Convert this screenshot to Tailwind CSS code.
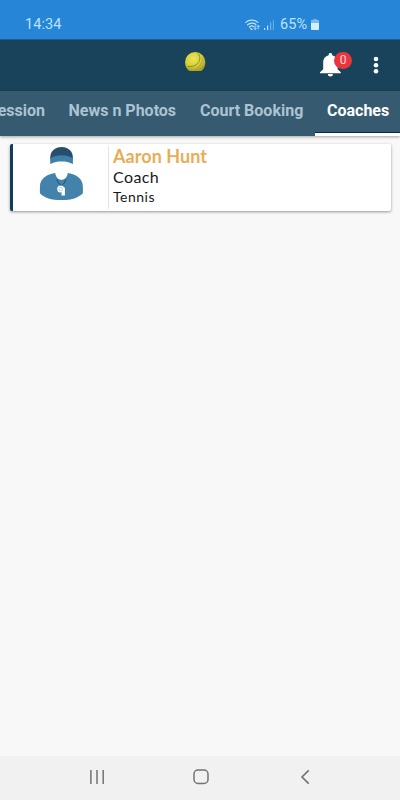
<!DOCTYPE html>
<html lang="en">
<head>
    <meta charset="UTF-8">
    <meta name="viewport" content="width=device-width, initial-scale=1.0">
    <title>Coaches</title>
    <script src="https://cdn.jsdelivr.net/npm/@tailwindcss/browser@4"></script>
</head>
<body class="flex flex-col w-[400px] h-[800px] overflow-hidden bg-[#f8f8f8] font-[Roboto,sans-serif]">

<!-- Status bar -->
<div class="flex items-center h-[39px] shrink-0 pt-[10px] pl-[25px] bg-[#2785d8] text-[#b9e4fa]">
    <span class="w-[220px] text-[14.5px] leading-4 tracking-[0.1px]">14:34</span>
    <svg class="w-[15px] h-[12px]" viewBox="0 0 15 12" fill="none" stroke="#b9e4fa" stroke-linecap="round">
        <path d="M.8 3.4C4 .3 9.4.3 12.8 3.4M2.6 5.800c2.400-2.200 6-2.200 8.300-.3M4.500 8c1.200-1.200 3.200-1.200 4.400-.2" stroke-width="1.200"/>
        <path d="M5.600 9.400L7 10.600" stroke-width="1.300"/>
        <path d="M10.200 6.800v3.600M9 9.400l1.200 1.200 1.200-1.200M13.200 10V6.600M12 7.600l1.200-1.200 1.200 1.200" stroke-width=".9"/>
    </svg>
    <svg class="ml-[3px] w-[12px] h-[12px]" viewBox="0 0 12 12" fill="#b9e4fa">
        <rect x="1" y="9" width="1.200" height="2"/>
        <rect x="4" y="6.500" width="1.200" height="4.500"/>
        <rect x="7" y="3.500" width="1.200" height="7.500" opacity=".5"/>
        <rect x="9.800" y="1" width="1.200" height="10" opacity=".4"/>
    </svg>
    <span class="ml-[5px] w-[31px] text-[14.5px] leading-4 tracking-[0.1px] whitespace-nowrap">65%</span>
    <svg class="mb-px w-[8px] h-[11px]" viewBox="0 0 8 11">
        <path d="M2.300 0h3.400v1H8v3H0V1h2.300z" fill="#7dbbea"/>
        <path d="M0 4h8v6.200a.8.8 0 01-.8.8H.8a.8.8 0 01-.8-.8z" fill="#d5effc"/>
    </svg>
</div>

<!-- App bar -->
<div class="flex h-[52px] shrink-0 bg-[#18435a] border-t border-[#1f5f8c]">
    <svg class="ml-[184px] mt-[11px] w-[22px] h-[22px]" viewBox="0 0 22 22">
        <defs>
            <radialGradient id="ball" cx=".42" cy=".35" r=".65">
                <stop offset="0" stop-color="#ece657"/>
                <stop offset=".6" stop-color="#d6d03a"/>
                <stop offset="1" stop-color="#a8a324"/>
            </radialGradient>
        </defs>
        <path d="M5.500 20C2.800 18.200 1 15 1 11.200a10.200 10.200 0 0120.400 0c0 3.800-1.600 7-4.300 8.800z" fill="url(#ball)"/>
        <path d="M14.200 2.600c2.600 3.400 2 7.600-.9 10.200-2.400 2.100-5.400 3-9.300 2.600" fill="none" stroke="#908b2a" stroke-width="1"/>
        <path d="M18.300 6.500c.3 4.500-2.300 8.500-5.300 10.500-1.500 1-2.500 1.800-3.500 3" fill="none" stroke="#aaa533" stroke-width=".8"/>
    </svg>
    <div class="relative ml-[114px] mt-[12px] w-[33px] h-[26px]">
        <svg class="w-[21px] h-[25px]" viewBox="0 0 21 25" fill="#fff">
            <path d="M10.400 1.100c1 0 1.700.7 1.700 1.700v.5c3.600.8 5.500 3.700 5.500 7.300v6.600l3.200 3.100v1H0v-1l3.200-3.100v-6.600C3.200 7 5.200 4.100 8.700 3.300v-.5c0-1 .7-1.700 1.700-1.700zM7.900 22h5a2.500 2.500 0 01-5 0z"/>
        </svg>
        <span class="absolute left-[14px] top-0 flex items-center justify-center w-[18px] h-[17px] pb-px rounded-full bg-[#e9363c] text-[12px] leading-none text-[#fbd9d9]">0</span>
    </div>
    <svg class="ml-[20px] mt-[16px] w-[6px] h-[18px]" viewBox="0 0 6 18" fill="#fff">
        <circle cx="3" cy="3" r="2.300"/>
        <circle cx="3" cy="9.200" r="2.300"/>
        <circle cx="3" cy="15.300" r="2.300"/>
    </svg>
</div>

<!-- Tabs -->
<div class="flex justify-end h-[45px] shrink-0 bg-[#365b70] shadow-[0_1px_3px_rgba(0,0,0,0.35)] text-[16px] font-bold text-[#abc3d3] whitespace-nowrap leading-[39px]">
    <span class="shrink-0 mr-[23.5px]">Session</span>
    <span class="shrink-0 w-[108px] mr-[23.5px]">News n Photos</span>
    <span class="shrink-0 w-[104px] mr-[11px]">Court Booking</span>
    <span class="flex flex-col justify-between shrink-0 w-[85px] text-white">
        <span class="pl-[12px]">Coaches</span>
        <span class="h-[4px] bg-white border-t border-[#0c2348]"></span>
    </span>
</div>

<!-- Coach list -->
<div class="flex-1 pt-[8px] pl-[10px] pr-[9px]">
    <div class="flex h-[67px] bg-white rounded-[2px] border-l-[3px] border-[#123e59] shadow-[0_1px_3px_rgba(0,0,0,0.4)]">
        <div class="w-[96px] my-[2px] border-r border-[#e4e4e4]">
            <svg class="ml-[26px] w-[46px] h-[56px]" viewBox="0 0 46 56">
                <path d="M11.200 13.500V12C11.200 5 16 1 22.600 1s11.300 4 11.300 11v1.500z" fill="#284e6e"/>
                <path d="M11.200 12.300c6.500-4.200 16.200-4.200 22.700 0v5.600c-2.500-.4-3.500-2.400-11.300-2.400s-8.900 2-11.400 2.400z" fill="#3e80a9"/>
                <path d="M16.200 27c-6.500 1.200-15.300 4-15.300 13.700v6.500C5.500 52 12 54 22.400 54S39 52 43.900 47.200v-6.500C43.900 31 35.300 28.200 28.800 27c-.6 4.300-3 6.800-6.300 6.800S16.800 31.300 16.200 27z" fill="#4383ab"/>
                <path d="M17.800 33.500c1 2.800 2.600 4.900 4.600 6.100 2-1.200 3.600-3.300 4.600-6.100" fill="none" stroke="#254865"/>
                <circle cx="21.700" cy="43" r="3.500" fill="#fff"/>
                <path d="M22 41.500h3.900v8h-3.500l.3-3.500z" fill="#fff"/>
                <circle cx="21.700" cy="43" r="1.800" fill="none" stroke="#8bb4cc" stroke-width=".6"/>
            </svg>
        </div>
        <div class="flex flex-col pl-[4px] font-[Lato,sans-serif] text-[#181818]">
            <span class="mt-[2px] text-[18px] leading-5 font-bold tracking-[0.05px] text-[#e8ae56]">Aaron Hunt</span>
            <span class="mt-[1px] text-[16px] leading-5 tracking-[0.4px]">Coach</span>
            <span class="text-[14px] leading-5 tracking-[0.5px]">Tennis</span>
        </div>
    </div>
</div>

<!-- Navigation bar -->
<div class="flex items-center h-[44px] shrink-0 pb-[2px] bg-[#f1f1f1]">
    <svg class="ml-[89px] w-[16px] h-[16px]" viewBox="0 0 16 16" stroke="#737373" stroke-width="1.500">
        <path d="M1.900 1v14M8 1v14M14.200 1v14"/>
    </svg>
    <svg class="ml-[88px] w-[16px] h-[16px]" viewBox="0 0 16 16" fill="none" stroke="#737373" stroke-width="1.500">
        <rect x="1" y="1" width="14" height="13.500" rx="4"/>
    </svg>
    <svg class="ml-[91px] w-[10px] h-[16px]" viewBox="0 0 10 16" fill="none" stroke="#737373" stroke-width="1.600">
        <path d="M8.700 1.400L2 8l6.700 6.600"/>
    </svg>
</div>
</body>
</html>
